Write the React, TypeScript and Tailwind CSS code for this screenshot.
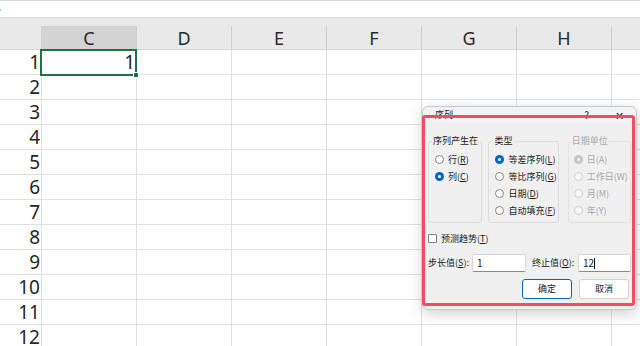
import React from "react";

const cols = ["C", "D", "E", "F", "G", "H", ""];
const rows = [1, 2, 3, 4, 5, 6, 7, 8, 9, 10, 11, 12];

function Radio({ checked, disabled }: { checked?: boolean; disabled?: boolean }) {
  if (checked && !disabled)
    return (
      <span className="w-[9px] h-[9px] rounded-full bg-[#0067c0] flex items-center justify-center shrink-0">
        <span className="w-[3px] h-[3px] rounded-full bg-white" />
      </span>
    );
  if (checked && disabled)
    return (
      <span className="w-[9px] h-[9px] rounded-full bg-[#c6c6c6] flex items-center justify-center shrink-0">
        <span className="w-[3px] h-[3px] rounded-full bg-[#f4f4f4]" />
      </span>
    );
  if (disabled)
    return <span className="w-[9px] h-[9px] rounded-full border border-[#cfcfcf] bg-[#f7f7f7] shrink-0" />;
  return <span className="w-[9px] h-[9px] rounded-full border border-[#858585] bg-white shrink-0" />;
}

function Opt({
  text,
  k,
  checked,
  disabled,
}: {
  text: string;
  k: string;
  checked?: boolean;
  disabled?: boolean;
}) {
  return (
    <div className="h-[17px] flex items-center gap-[4px] whitespace-nowrap">
      <Radio checked={checked} disabled={disabled} />
      <span className={disabled ? "text-[#a8a8a8]" : "text-[#1b1b1b]"}>
        {text}(
        {disabled ? k : <span className="underline underline-offset-1">{k}</span>})
      </span>
    </div>
  );
}

export default function App() {
  return (
    <div
      className="relative w-[640px] h-[346px] overflow-hidden bg-white"
      style={{ fontFamily: '"Noto Sans", "Open Sans", sans-serif' }}
    >
      {/* formula bar */}
      <div className="h-[18px] border-y border-[#dadada] bg-white relative">
        <span className="absolute left-0 top-[8px] w-[1px] h-[2px] bg-[#9cc3ea]" />
      </div>
      <div className="h-[8px] bg-[#e9e9e9]" />
      {/* column headers */}
      <div className="flex h-[24px] bg-[#e9e9e9] border-b border-[#d6d6d6]">
        <div className="w-[42px] shrink-0 border-r border-[#d2d2d2]" />
        {cols.map((c, i) => (
          <div
            key={i}
            className={`w-[95px] shrink-0 border-r border-[#cdcdcd] flex items-center justify-center text-[18px] leading-none text-[#2a2a2a] ${
              c === "C" ? "bg-[#d3d3d3]" : ""
            }`}
          >
            {c}
          </div>
        ))}
      </div>
      {/* rows */}
      {rows.map((r) => (
        <div key={r} className="flex h-[25px]">
          <div className="w-[42px] shrink-0 border-r border-b border-[#e0e0e0] flex items-center justify-end pr-[1px] text-[19px] leading-none text-[#262626]">
            {r}
          </div>
          {cols.map((c, i) => (
            <div
              key={i}
              className="w-[95px] shrink-0 border-r border-b border-[#e1e1e1] flex items-center justify-end pr-[1px] text-[19px] leading-none text-[#262626]"
            >
              {r === 1 && c === "C" ? "1" : ""}
            </div>
          ))}
        </div>
      ))}

      {/* selected cell */}
      <div className="absolute left-[40px] top-[49px] w-[97px] h-[27px] border-2 border-[#1f7244]" />
      <div className="absolute left-[133px] top-[72px] w-[6px] h-[6px] bg-[#1f7244] border border-white" />

      {/* dialog */}
      <div
        className="absolute left-[422px] top-[106px] w-[215px] h-[204px] bg-[#f0f0f0] rounded-[6px] border border-[#c9c9c9] shadow-[0_4px_14px_rgba(0,0,0,0.18)] text-[9px] leading-[12px] text-[#1b1b1b]"
        style={{ fontFamily: '"Noto Sans CJK SC", "Noto Sans", sans-serif' }}
      >
        <div className="h-[16px] flex items-center rounded-t-[6px] bg-[#f1f3f7]">
          <span className="ml-[12px]">序列</span>
          <span className="ml-auto mr-[26px] text-[10px]">?</span>
          <span className="mr-[12px] text-[11px]">✕</span>
        </div>
        <div className="px-[5px] pt-[12px]">
          <div className="flex">
            <fieldset className="w-[55px] h-[88px] border border-[#dcdcdc] rounded-[3px] pl-[6px] min-w-0">
              <legend className="ml-[-3px] px-[1px] leading-[12px] whitespace-nowrap">序列产生在</legend>
              <div className="pt-[4px]">
                <Opt text="行" k="R" />
                <Opt text="列" k="C" checked />
              </div>
            </fieldset>
            <fieldset className="ml-[6px] w-[71px] h-[88px] border border-[#dcdcdc] rounded-[3px] pl-[6px] min-w-0">
              <legend className="ml-[-2px] px-[1px] leading-[12px] whitespace-nowrap">类型</legend>
              <div className="pt-[4px]">
                <Opt text="等差序列" k="L" checked />
                <Opt text="等比序列" k="G" />
                <Opt text="日期" k="D" />
                <Opt text="自动填充" k="F" />
              </div>
            </fieldset>
            <fieldset className="ml-[9px] w-[64px] h-[88px] border border-[#e2e2e2] rounded-[3px] pl-[5px] min-w-0">
              <legend className="ml-[-3px] px-[1px] leading-[12px] whitespace-nowrap text-[#a8a8a8]">日期单位</legend>
              <div className="pt-[4px]">
                <Opt text="日" k="A" checked disabled />
                <Opt text="工作日" k="W" disabled />
                <Opt text="月" k="M" disabled />
                <Opt text="年" k="Y" disabled />
              </div>
            </fieldset>
          </div>
          <div className="mt-[7px] h-[17px] flex items-center gap-[4px]">
            <span className="w-[9px] h-[9px] border border-[#7e7e7e] bg-white rounded-[1px]" />
            <span>
              预测趋势(<span className="underline underline-offset-1">T</span>)
            </span>
          </div>
          <div className="mt-[7px] h-[18px] flex items-center whitespace-nowrap">
            <span className="w-[44px] shrink-0">
              步长值(<span className="underline underline-offset-1">S</span>):
            </span>
            <div className="w-[54px] h-[18px] bg-white border border-[#d6d6d6] border-b-[#8a8a8a] rounded-[2px] flex items-center pl-[4px] text-[10px]">
              1
            </div>
            <span className="ml-[6px] w-[46px] shrink-0">
              终止值(<span className="underline underline-offset-1">O</span>):
            </span>
            <div className="w-[53px] h-[18px] bg-white border border-[#d6d6d6] border-b-[#8a8a8a] rounded-[2px] flex items-center pl-[4px] text-[10px]">
              12
              <span className="w-[1px] h-[11px] bg-[#111]" />
            </div>
          </div>
          <div className="mt-[7px] flex">
            <div className="ml-[94px] w-[50px] h-[20px] bg-white border border-[#0067c0] rounded-[3px] flex items-center justify-center">
              确定
            </div>
            <div className="ml-[7px] w-[50px] h-[20px] bg-white border border-[#d3d3d3] rounded-[3px] flex items-center justify-center">
              取消
            </div>
          </div>
        </div>
      </div>

      {/* red highlight */}
      <div className="absolute left-[422px] top-[115px] w-[213px] h-[191px] border-[3px] border-[#f24b63] rounded-[3px]" />
    </div>
  );
}
